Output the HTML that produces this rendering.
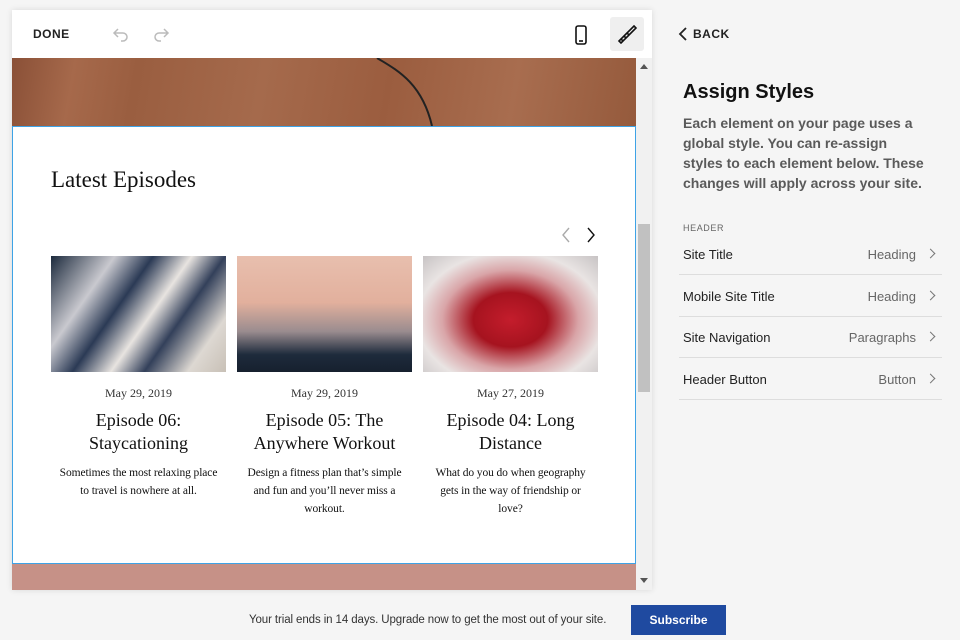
<!DOCTYPE html>
<html><head><style>
*{margin:0;padding:0;box-sizing:border-box}
body{width:960px;height:640px;background:#f5f5f5;font-family:"Liberation Sans",sans-serif;position:relative;overflow:hidden}
.frame{position:absolute;left:12px;top:10px;width:640px;height:580px;background:#fff;box-shadow:0 0 6px rgba(0,0,0,.12)}
.top{position:absolute;left:0;top:0;width:640px;height:48px;background:#fff}
.done{position:absolute;left:21px;top:17px;font-size:12px;font-weight:bold;letter-spacing:.5px;color:#222}
.wood{position:absolute;left:0;top:48px;width:624px;height:68px;background:linear-gradient(100deg,#8a5037 0%,#a6694b 10%,#9a5e40 20%,#a56a4c 40%,#9b5d3f 60%,#a86d4f 80%,#955a3c 100%)}
.sec{position:absolute;left:0;top:116px;width:624px;height:438px;border:1px solid #3ea3e6;background:#fff}
.pink{position:absolute;left:0;top:554px;width:624px;height:26px;background:#c69187}
.sb{position:absolute;left:624px;top:48px;width:16px;height:532px;background:#f1f1f1}
.thumb{position:absolute;left:2px;top:166px;width:12px;height:168px;background:#c1c1c1}
.serif{font-family:"Liberation Serif",serif;color:#111}
.h{position:absolute;left:38px;top:40px;font-size:23px}
.card{position:absolute;top:129px;width:175px;text-align:center}
.img{height:116px}
.d{font-size:12px;margin-top:14px;color:#333}
.t{font-size:18px;line-height:23px;margin-top:8px}
.p{font-size:11.5px;line-height:18px;margin-top:9px;padding:0 8px;letter-spacing:-.1px}
.rp{position:absolute;left:683px}
.row{position:absolute;left:679px;width:263px;height:41px;border-bottom:1px solid #ddd;font-size:13px;color:#222}
.row span{position:absolute;left:4px;top:13px}
.row b{position:absolute;right:26px;top:13px;font-weight:normal;color:#666}
.row i{position:absolute;right:8px;top:16px;width:7px;height:7px;border-top:1.5px solid #777;border-right:1.5px solid #777;transform:rotate(45deg)}
</style></head><body>
<div class="frame">
 <div class="top">
  <div class="done">DONE</div>
  <svg style="position:absolute;left:100px;top:15px" width="18" height="18" viewBox="0 0 18 18" fill="none" stroke="#bbb" stroke-width="1.5"><path d="M6 4L2 8l4 4M2 8h9a4 4 0 010 8H9"/></svg>
  <svg style="position:absolute;left:140px;top:15px" width="18" height="18" viewBox="0 0 18 18" fill="none" stroke="#bbb" stroke-width="1.5"><path d="M12 4l4 4-4 4M16 8H7a4 4 0 000 8h2"/></svg>
  <svg style="position:absolute;left:562px;top:14px" width="14" height="22" viewBox="0 0 14 22" fill="none" stroke="#111" stroke-width="1.6"><rect x="2" y="2" width="10" height="18" rx="2"/><path d="M5 17h4"/></svg>
  <div style="position:absolute;left:598px;top:7px;width:34px;height:34px;background:#efefef;border-radius:3px"></div>
  <svg style="position:absolute;left:604px;top:13px" width="22" height="22" viewBox="0 0 22 22" fill="none" stroke="#111" stroke-width="1.6"><path d="M18 3l2 2-7 7-2-2zM11 10l-6 6 2 2 6-6M5 16l-2 2 2 2 2-2M8 13l2 2"/></svg>
 </div>
 <div class="wood"><svg width="624" height="68"><path d="M365 0 C385 12 410 25 420 68" stroke="#222" stroke-width="2" fill="none"/></svg></div>
 <div class="sec">
  <div class="h serif">Latest Episodes</div>
  <svg style="position:absolute;left:546px;top:100px" width="40" height="16" fill="none" stroke-width="1.4"><path d="M10 1L4 8l6 7" stroke="#aaa"/><path d="M29 1l6 7-6 7" stroke="#111"/></svg>
  <div class="card serif" style="left:38px"><div class="img" style="background:linear-gradient(125deg,#1c2a3d 0%,#c9c9cf 25%,#2b3a55 40%,#e8e4e0 55%,#33405a 68%,#ddd8d2 85%,#c8c0b6 100%)"></div><div class="d">May 29, 2019</div><div class="t">Episode 06:<br>Staycationing</div><div class="p">Sometimes the most relaxing place to travel is nowhere at all.</div></div>
  <div class="card serif" style="left:224px"><div class="img" style="background:linear-gradient(180deg,#e8bfae 0%,#e2b09d 40%,#9a8c8f 65%,#1e2b3c 85%,#16202e 100%)"></div><div class="d">May 29, 2019</div><div class="t">Episode 05: The<br>Anywhere Workout</div><div class="p">Design a fitness plan that’s simple and fun and you’ll never miss a workout.</div></div>
  <div class="card serif" style="left:410px"><div class="img" style="background:radial-gradient(ellipse at 50% 55%,#c41d2c 0%,#a6131f 30%,#d9a5a8 55%,#e9e4e3 75%,#c7c3c4 100%)"></div><div class="d">May 27, 2019</div><div class="t">Episode 04: Long<br>Distance</div><div class="p">What do you do when geography gets in the way of friendship or love?</div></div>
 </div>
 <div class="pink"></div>
 <div class="sb"><div style="position:absolute;left:4px;top:6px;border:4px solid transparent;border-bottom:5px solid #555;border-top:0"></div><div class="thumb"></div><div style="position:absolute;left:4px;top:520px;border:4px solid transparent;border-top:5px solid #555;border-bottom:0"></div></div>
</div>
<svg style="position:absolute;left:678px;top:27px" width="10" height="14" fill="none" stroke="#222" stroke-width="1.8"><path d="M8 1L2 7l6 6"/></svg>
<div class="rp" style="left:693px;top:27px;font-size:12px;font-weight:bold;letter-spacing:.5px;color:#222">BACK</div>
<div class="rp" style="top:81px;font-size:20px;font-weight:bold;color:#111">Assign Styles</div>
<div class="rp" style="top:113px;width:256px;font-size:14px;line-height:20px;color:#5a5a5a;font-weight:bold;letter-spacing:0">Each element on your page uses a global style. You can re-assign<br>styles to each element below. These changes will apply across your site.</div>
<div class="rp" style="top:223px;font-size:9px;letter-spacing:.6px;color:#666">HEADER</div>
<div class="row" style="top:234px"><span>Site Title</span><b>Heading</b><i></i></div>
<div class="row" style="top:276px"><span>Mobile Site Title</span><b>Heading</b><i></i></div>
<div class="row" style="top:317px"><span>Site Navigation</span><b>Paragraphs</b><i></i></div>
<div class="row" style="top:359px"><span>Header Button</span><b>Button</b><i></i></div>
<div style="position:absolute;left:249px;top:614px;font-size:11.5px;letter-spacing:-.1px;color:#333">Your trial ends in 14 days. Upgrade now to get the most out of your site.</div>
<div style="position:absolute;left:631px;top:605px;width:95px;height:30px;background:#1f4aa0;color:#fff;font-size:12px;font-weight:bold;text-align:center;line-height:30px">Subscribe</div>
</body></html>
